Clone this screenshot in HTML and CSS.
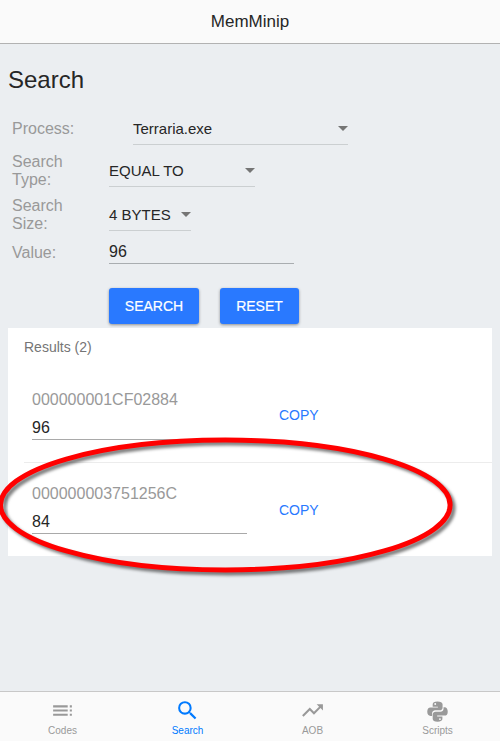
FILE: index.html
```html
<!DOCTYPE html>
<html lang="en">
<head>
<meta charset="utf-8">
<title>MemMinip</title>
<link rel="stylesheet" href="styles.css">
</head>
<body>
<div class="app">
  <header class="topbar">MemMinip</header>
  <main class="content">
    <h1 class="title">Search</h1>
    <form class="form">
      <div class="row row-process"><label class="label">Process:</label><div class="select wide">Terraria.exe<span class="caret"></span></div></div>
      <div class="row row-type"><label class="label">Search Type:</label><div class="select medium">EQUAL TO<span class="caret"></span></div></div>
      <div class="row row-size"><label class="label">Search Size:</label><div class="select small">4 BYTES<span class="caret"></span></div></div>
      <div class="row row-value"><label class="label">Value:</label><div class="input">96</div></div>
      <div class="actions"><button type="button" class="btn btn-search">SEARCH</button><button type="button" class="btn btn-reset">RESET</button></div>
    </form>
    <section class="card">
      <div class="card-title">Results (2)</div>
      <div class="result first">
        <div class="entry"><div class="address">000000001CF02884</div><div class="amount">96</div></div>
        <a class="copy">COPY</a>
      </div>
      <div class="result second">
        <div class="entry"><div class="address">000000003751256C</div><div class="amount">84</div></div>
        <a class="copy">COPY</a>
      </div>
    </section>
  </main>
  <nav class="tabs">
    <a class="tab"><svg class="icon" viewBox="0 0 24 24"><path d="M3 9h14V7H3v2zm0 4h14v-2H3v2zm0 4h14v-2H3v2zm16 0h2v-2h-2v2zm0-10v2h2V7h-2zm0 6h2v-2h-2v2z"/></svg><span>Codes</span></a>
    <a class="tab active"><svg class="icon" viewBox="0 0 24 24"><path d="M15.500 14h-.79l-.28-.27A6.470 6.470 0 0 0 16 9.500 6.500 6.500 0 1 0 9.500 16c1.610 0 3.090-.59 4.230-1.570l.27.28v.79l5 4.990L20.490 19l-4.990-5zm-6 0C7.010 14 5 11.990 5 9.500S7.010 5 9.500 5 14 7.010 14 9.500 11.990 14 9.500 14z"/></svg><span>Search</span></a>
    <a class="tab"><svg class="icon" viewBox="0 0 24 24"><path d="M16 6l2.290 2.290-4.880 4.880-4-4L2 16.590 3.410 18l6-6 4 4 6.300-6.290L22 12V6z"/></svg><span>AOB</span></a>
    <a class="tab"><svg class="icon" viewBox="0 0 24 24"><path d="M12 .5C8 .5 6.500 1.800 6.500 3.800V6.500h6v1H4C1.700 7.500.3 9.300.3 12.300S1.700 17 4 17h1.800v-2.800c0-2 1.600-3.500 3.600-3.500h5.400c1.700 0 3-1.300 3-3V3.800C17.800 1.700 15.500.5 12 .5zM9.400 2.400a1.100 1.100 0 1 1 0 2.200 1.100 1.100 0 0 1 0-2.200z"/><path d="M12 23.700c4 0 5.600-1.300 5.600-3.300v-2.700h-6v-1h8.500c2.300 0 3.600-1.700 3.600-4.500s-1.300-5-3.600-5h-1.200v1.900c0 1.700-1.600 3.100-3.600 3.100H9.800c-1.700 0-3.300 1.400-3.300 3.300v4.900c0 2.100 2 3.300 5.500 3.300zM14.800 21.800a1.100 1.100 0 1 1 0-2.200 1.100 1.100 0 0 1 0 2.200z"/></svg><span>Scripts</span></a>
  </nav>
  <svg class="highlight" viewBox="0 0 500 741"><ellipse cx="225.300" cy="505" rx="224.800" ry="65"/></svg>
</div>
</body>
</html>
```

FILE: styles.css
```css
* { box-sizing: border-box; }
body {
  margin: 0;
  font-family: "Liberation Sans", Arial, sans-serif;
  font-size: 16px;
  line-height: 18px;
  color: #262626;
}
.app {
  position: relative;
  display: flex;
  flex-direction: column;
  height: 741px;
  overflow: hidden;
  background: #ebeef1;
}
.topbar {
  height: 44px;
  padding-top: 12px;
  border-bottom: 1px solid #b2b2b2;
  background: #fafafa;
  font-size: 17px;
  line-height: 20px;
  text-align: center;
}
.content { flex: 1; padding: 0 8px; }
.title {
  height: 61px;
  margin: 0;
  padding-top: 22px;
  font-size: 24px;
  font-weight: 400;
  line-height: 28px;
}
.row {
  display: flex;
  align-items: flex-end;
  padding-left: 4px;
}
.row-process { height: 40px; }
.row-type { height: 42px; }
.row-size { height: 44px; }
.row-value { height: 33px; }
.label {
  align-self: flex-start;
  width: 97px;
  padding-right: 20px;
  color: #999;
}
.row-process .label { width: 121px; padding-top: 15px; }
.row-type .label { padding-top: 8px; }
.row-size .label { padding-top: 10px; }
.row-value .label { padding-top: 13px; }
.select {
  display: flex;
  justify-content: space-between;
  height: 25px;
  border-bottom: 1px solid #cbcfd1;
  font-size: 15px;
}
.wide { width: 215px; }
.medium { width: 146px; }
.small { width: 82px; }
.caret {
  width: 10px;
  height: 5px;
  margin-top: 6px;
  background: #757575;
  clip-path: polygon(0 0, 100% 0, 50% 100%);
}
.input {
  width: 185px;
  height: 21px;
  border-bottom: 1px solid #a9adb0;
}
.actions {
  display: flex;
  gap: 21px;
  height: 64px;
  padding: 24px 0 0 101px;
}
.btn {
  height: 36px;
  padding: 0;
  border: 0;
  border-radius: 3px;
  background: #2979ff;
  box-shadow: 0 1px 3px rgba(0, 0, 0, .4);
  color: #fff;
  font: 14px/36px "Liberation Sans", Arial, sans-serif;
  -webkit-text-stroke: .2px #fff;
}
.btn-search { width: 90px; }
.btn-reset { width: 79px; }
.card {
  height: 228px;
  padding-left: 16px;
  background: #fff;
}
.card-title {
  height: 40px;
  padding-top: 10px;
  color: #757575;
  font-size: 14px;
}
.result {
  display: flex;
  padding-left: 8px;
}
.first { height: 95px; padding-top: 23px; border-bottom: 1px solid #ececec; }
.second { height: 93px; padding-top: 22px; }
.entry { width: 215px; }
.address { height: 28px; color: #999; }
.amount { height: 21px; border-bottom: 1px solid #a9a9a9; }
.copy {
  margin: 15px 0 0 32px;
  color: #2979ff;
  font-size: 14px;
}
.second .copy { margin-top: 16px; }
.tabs {
  display: grid;
  grid-template-columns: repeat(4, 1fr);
  height: 50px;
  border-top: 1px solid #c8c8c8;
  background: #fafafa;
}
.tab {
  display: flex;
  flex-direction: column;
  align-items: center;
  padding-top: 6px;
  color: #999;
  font-size: 10px;
  line-height: 12px;
}
.active { color: #007aff; }
.icon { width: 25px; height: 25px; margin-bottom: 2px; fill: currentColor; }
.tab:last-child .icon { width: 21px; height: 21px; margin: 3px 0; }
.highlight {
  position: absolute;
  inset: 0;
  width: 500px;
  height: 741px;
  fill: none;
  stroke: #f00;
  stroke-width: 5;
  filter: drop-shadow(3px 3px 1.5px rgba(0, 0, 0, .5));
  pointer-events: none;
}
```
